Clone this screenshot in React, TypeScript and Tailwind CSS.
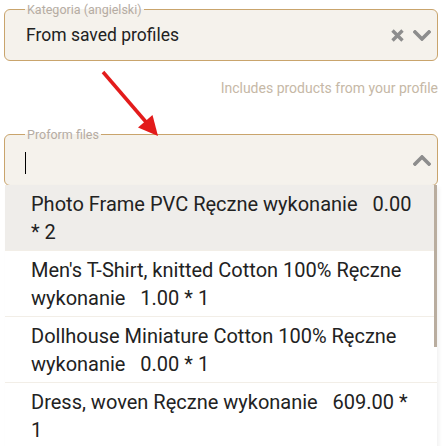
import React from "react";

const items = [
  "Photo Frame PVC Ręczne wykonanie   0.00 * 2",
  "Men's T-Shirt, knitted Cotton 100% Ręczne wykonanie   1.00 * 1",
  "Dollhouse Miniature Cotton 100% Ręczne wykonanie   0.00 * 1",
  "Dress, woven Ręczne wykonanie   609.00 * 1",
];

function ChevronDown() {
  return (
    <svg width="18" height="11" viewBox="0 0 18 11" className="block">
      <polyline points="2,2 9,9 16,2" fill="none" stroke="#8d8d8d" strokeWidth="3.6" strokeLinecap="square" strokeLinejoin="miter" />
    </svg>
  );
}

function ChevronUp() {
  return (
    <svg width="18" height="11" viewBox="0 0 18 11" className="block">
      <polyline points="2,9 9,2 16,9" fill="none" stroke="#8d8d8d" strokeWidth="3.6" strokeLinecap="square" strokeLinejoin="miter" />
    </svg>
  );
}

function Cross() {
  return (
    <svg width="13" height="13" viewBox="0 0 13 13" className="block">
      <path d="M1.5 1.5 L11.5 11.5 M11.5 1.5 L1.5 11.5" fill="none" stroke="#8d8d8d" strokeWidth="3.4" strokeLinecap="butt" />
    </svg>
  );
}

export default function App() {
  return (
    <div
      className="relative h-[446px] w-[447px] overflow-hidden bg-white pl-[4px] pr-[9px] pt-[9px]"
      style={{ fontFamily: "Roboto, 'Liberation Sans', sans-serif" }}
    >
      {/* Category field */}
      <div className="relative flex h-[52px] items-center rounded-[6px] border border-[#c9a46c] bg-[#f5f2ec] pl-[21px] pr-[6px]">
        <span className="absolute left-[20px] top-[-7px] bg-[linear-gradient(to_bottom,#ffffff_6px,#f5f2ec_6px)] px-[2px] text-[12.5px] leading-[14px] text-[#b5aca3]">
          Kategoria (angielski)
        </span>
        <span className="flex-1 text-[17.5px] leading-[24px] text-[#222222]">From saved profiles</span>
        <div className="flex items-center gap-[9px]">
          <Cross />
          <ChevronDown />
        </div>
      </div>

      <div className="mt-[17px] flex justify-end">
        <span className="text-[14px] leading-[20px] text-[#c6b8a6]">Includes products from your profile</span>
      </div>

      {/* Proform files field */}
      <div className="relative mt-[36px] flex h-[52px] items-center rounded-[6px] border border-[#c9a46c] bg-[#f5f2ec] pl-[20px] pr-[6px]">
        <span className="absolute left-[20px] top-[-7px] bg-[linear-gradient(to_bottom,#ffffff_6px,#f5f2ec_6px)] px-[2px] text-[12.5px] leading-[14px] text-[#b5aca3]">
          Proform files
        </span>
        <div className="flex-1">
          <div className="mt-[5px] h-[22px] w-[1px] bg-black" />
        </div>
        <ChevronUp />

        {/* Dropdown menu */}
        <div className="absolute left-0 right-0 top-full z-10 bg-white shadow-[2px_2px_4px_rgba(0,0,0,0.06)]">
          {items.map((t, i) => (
            <div
              key={i}
              className={`whitespace-pre-wrap border-b border-[#f2eee7] pb-[4px] pl-[26px] pr-[20px] pt-[5px] text-[20px] leading-[28px] text-[#222222] ${
                i === 0 ? "bg-[#efedea]" : "bg-white"
              }`}
            >
              {t}
            </div>
          ))}
          <div className="absolute right-0 top-0 h-[162px] w-[3px] bg-[#b9ad9f]" />
        </div>
      </div>

      {/* Red arrow annotation */}
      <svg className="pointer-events-none absolute left-0 top-0 z-20" width="447" height="446" viewBox="0 0 447 446">
        <line x1="103" y1="72" x2="146" y2="122" stroke="#e31b1b" strokeWidth="3.5" />
        <polygon points="158,136 138,127.5 152.5,115" fill="#e31b1b" />
      </svg>
    </div>
  );
}
